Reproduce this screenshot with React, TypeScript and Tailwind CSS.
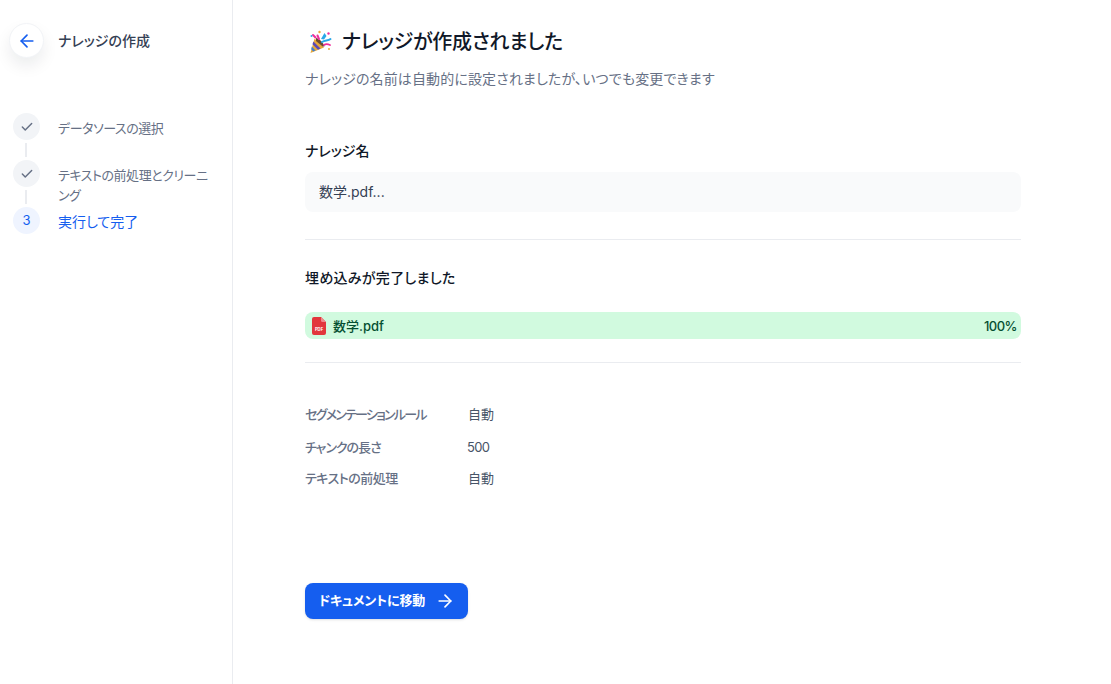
import { ArrowLeft, ArrowRight, Check } from "lucide-react"

function PartyIcon() {
  return (
    <svg width="24" height="24" viewBox="0 0 24 24" className="ml-[3px] shrink-0">
      <path d="M6.5 8.5 L16 17.5 L2.5 23 Z" fill="#e8a93a" />
      <path d="M5.4 11.5 L12.5 18.6 L10 19.8 L4.5 14.2 Z" fill="#5b4bb5" />
      <path d="M3.8 16.5 L7.5 20.6 L5.3 21.6 L3.2 19.2 Z" fill="#3f7fd0" />
      <path d="M8 8 C11 8.500 15 12 16.500 16.500 L14.500 16.500 L8 11 Z" fill="#6b4a35" />
      <path d="M9.500 5.500 L11 9 M5 5 L7.500 7.500" stroke="#ef2f9b" strokeWidth="2" strokeLinecap="round" />
      <path d="M13 9 L16.500 3 L18.500 6 L16 9.500 Z" fill="#2aa8e8" />
      <path d="M14 12 C17 10 20 11 22.500 9" fill="none" stroke="#2aa8e8" strokeWidth="2" strokeLinecap="round" />
      <path d="M16 15 C18 13.500 20 14 22 15" fill="none" stroke="#ef2f9b" strokeWidth="1.700" strokeLinecap="round" />
      <circle cx="11.500" cy="2" r="1.200" fill="#e8a93a" />
      <circle cx="20.500" cy="3.500" r="1.200" fill="#ef2f9b" />
      <circle cx="21" cy="19" r="1" fill="#e8a93a" />
      <circle cx="3.500" cy="6" r="1" fill="#2aa8e8" />
    </svg>
  )
}

function PdfIcon() {
  return (
    <svg width="14" height="18" viewBox="0 0 14 18" className="shrink-0">
      <path d="M2 0 H9 L14 5 V16 a2 2 0 0 1 -2 2 H2 a2 2 0 0 1 -2 -2 V2 a2 2 0 0 1 2 -2 Z" fill="#e2363c" />
      <path d="M9 0 L14 5 H10.500 a1.500 1.500 0 0 1 -1.500 -1.500 Z" fill="#f08a8d" />
      <text x="7" y="14" textAnchor="middle" fontSize="4.2" fontWeight="700" fill="#fff">PDF</text>
    </svg>
  )
}

function Step({ label, done, active, line }: { label: string; done?: boolean; active?: boolean; line?: boolean }) {
  return (
    <div className="flex items-start gap-[18px]">
      <div className="flex w-[27px] shrink-0 flex-col">
        <div
          className={
            "flex h-[27px] w-[27px] items-center justify-center rounded-full text-[13px] " +
            (active ? "bg-[#eff4ff] text-[#155eef]" : "bg-[#f2f4f7] text-[#667085]")
          }
        >
          {done ? <Check size={14} strokeWidth={2.5} /> : "3"}
        </div>
        {line && <div className="my-[3px] ml-[12px] h-[14px] w-[2px] bg-[#eaecf0]" />}
      </div>
      <div
        className={
          "pt-[5px] leading-[20px] " +
          (active ? "text-sm text-[#155eef]" : "text-[13px] tracking-[-0.45px] text-[#667085]")
        }
      >
        {label}
      </div>
    </div>
  )
}

export default function App() {
  return (
    <div className="flex h-[684px] w-[1111px] overflow-hidden bg-white font-['Inter','Noto_Sans_CJK_JP',sans-serif] [font-feature-settings:'palt']">
      <aside className="w-[233px] shrink-0 border-r border-[#eaecf0]">
        <div className="flex items-center gap-[14px] pl-[9px] pt-[23px]">
          <div className="flex h-[35px] w-[35px] items-center justify-center rounded-full border border-[#f2f4f7] bg-white text-[#155eef] shadow-[0_8px_16px_rgba(16,24,40,0.08)]">
            <ArrowLeft size={20} strokeWidth={2} />
          </div>
          <div className="text-sm font-medium text-[#344054]">ナレッジの作成</div>
        </div>
        <div className="pl-[13px] pr-[20px] pt-[55px]">
          <Step label="データソースの選択" done line />
          <Step label="テキストの前処理とクリーニング" done line />
          <Step label="実行して完了" active />
        </div>
      </aside>
      <main className="min-w-0 flex-1 pl-[72px]">
        <div className="w-[716px]">
          <div className="flex items-center gap-[10px] pt-[27px]">
            <PartyIcon />
            <h1 className="text-xl leading-[30px] font-medium tracking-[-0.25px] text-[#101828]">ナレッジが作成されました</h1>
          </div>
          <p className="mt-[12px] text-sm leading-[20px] tracking-[0.13px] text-[#667085]">ナレッジの名前は自動的に設定されましたが、いつでも変更できます</p>

          <div className="mt-[52px] text-sm leading-[20px] font-medium text-[#101828]">ナレッジ名</div>
          <div className="mt-[11px] flex h-[40px] items-center rounded-lg bg-[#f9fafb] px-[14px] text-sm text-[#344054]">数学.pdf...</div>
          <div className="mt-[27px] h-px bg-[#eaecf0]" />

          <div className="mt-[28px] text-sm leading-[20px] font-medium tracking-[0.3px] text-[#101828]">埋め込みが完了しました</div>
          <div className="mt-[24px] flex h-[27px] items-center justify-between rounded-lg bg-[#d1fadf] pl-[7px] pr-[4px] text-[13px] font-medium text-[#054f31]">
            <div className="flex items-center gap-[7px]">
              <PdfIcon />
              <span className="pt-[2px]">数学.pdf</span>
            </div>
            <span className="pt-[2px] tracking-[-0.5px]">100%</span>
          </div>
          <div className="mt-[23px] h-px bg-[#eaecf0]" />

          <div className="mt-[41px] grid grid-cols-[163px_1fr] grid-rows-[33px_31px_20px] text-[13px] leading-[20px]">
            <div className="font-medium tracking-[-1.75px] text-[#667085]">セグメンテーションルール</div>
            <div className="text-[#475467]">自動</div>
            <div className="font-medium tracking-[-1px] text-[#667085]">チャンクの長さ</div>
            <div className="-ml-px tracking-[-0.7px] text-[#475467]">500</div>
            <div className="font-medium tracking-[-0.5px] text-[#667085]">テキストの前処理</div>
            <div className="text-[#475467]">自動</div>
          </div>

          <button className="mt-[95px] flex h-[36px] w-[163px] items-center justify-center gap-[10px] rounded-lg bg-[#155eef] pl-px text-[13px] font-semibold tracking-[-0.1px] text-white shadow-sm">
            ドキュメントに移動
            <ArrowRight size={20} strokeWidth={2} />
          </button>
        </div>
      </main>
    </div>
  )
}
